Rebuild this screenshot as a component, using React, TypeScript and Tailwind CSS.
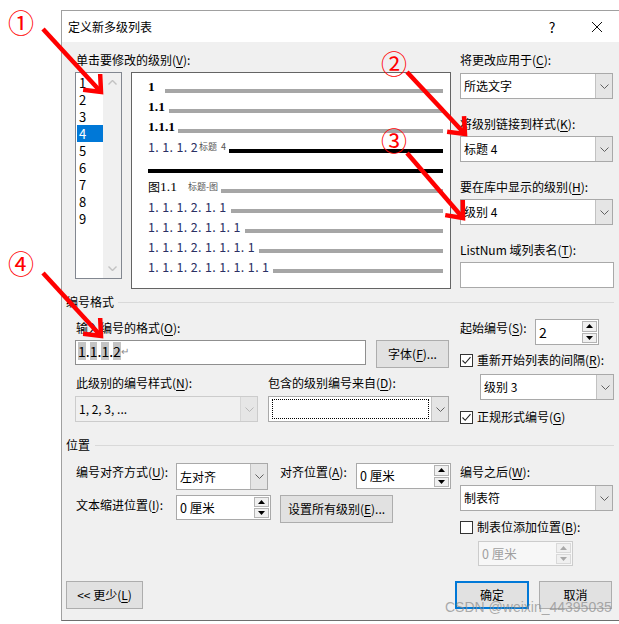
import React from "react";

function U({ children }: { children: React.ReactNode }) {
  return <span className="underline underline-offset-[2px] decoration-[1px]">{children}</span>;
}

function Chev({ color = "#5c5c5c" }: { color?: string }) {
  return (
    <svg width="9" height="5" viewBox="0 0 9 5">
      <polyline points="0.5,0.5 4.5,4.5 8.5,0.5" fill="none" stroke={color} strokeWidth="1" />
    </svg>
  );
}

function Select({
  className = "",
  text,
  disabled = false,
  focus = false,
}: {
  className?: string;
  text?: React.ReactNode;
  disabled?: boolean;
  focus?: boolean;
}) {
  return (
    <div
      className={`flex shrink-0 border ${
        disabled ? "border-[#cccccc] bg-[#f0f0f0]" : "border-[#a9a9a9] bg-white"
      } ${className}`}
    >
      <div className="flex-1 min-w-0 flex items-center pl-[3px]">
        {focus ? (
          <div className="w-full h-[20px] border border-dotted border-black mr-[2px]" />
        ) : (
          <span className="whitespace-nowrap">{text}</span>
        )}
      </div>
      <div
        className={`w-[17px] flex items-center justify-center border-l ${
          disabled ? "border-[#d6d6d6] bg-[#e6e6e6]" : "border-[#c2c2c2] bg-[#e5e5e5]"
        }`}
      >
        <Chev color={disabled ? "#b8b8b8" : "#606060"} />
      </div>
    </div>
  );
}

function Tri({ up, color }: { up: boolean; color: string }) {
  return (
    <svg width="7" height="4" viewBox="0 0 7 4">
      <polygon points={up ? "0,4 3.5,0 7,4" : "0,0 3.5,4 7,0"} fill={color} />
    </svg>
  );
}

function Spin({
  className = "",
  text,
  disabled = false,
  big = false,
}: {
  className?: string;
  text: string;
  disabled?: boolean;
  big?: boolean;
}) {
  return (
    <div
      className={`flex shrink-0 border ${
        disabled ? "border-[#cccccc] bg-[#f7f7f7] text-[#a0a0a0]" : "border-[#a9a9a9] bg-white text-black"
      } ${className}`}
    >
      <div className={`flex-1 flex items-center pl-[3px] whitespace-nowrap ${big ? "text-[14px]" : "text-[12.5px]"}`}>
        {text}
      </div>
      <div className="w-[17px] flex flex-col gap-[1px] p-[1px]">
        <div
          className={`flex-1 flex items-center justify-center border ${
            disabled ? "border-[#d9d9d9] bg-[#f0f0f0]" : "border-[#b4b4b4] bg-[#f0f0f0]"
          }`}
        >
          <Tri up color={disabled ? "#a8a8a8" : "#000"} />
        </div>
        <div
          className={`flex-1 flex items-center justify-center border ${
            disabled ? "border-[#d9d9d9] bg-[#f0f0f0]" : "border-[#b4b4b4] bg-[#f0f0f0]"
          }`}
        >
          <Tri up={false} color={disabled ? "#a8a8a8" : "#000"} />
        </div>
      </div>
    </div>
  );
}

function Check({ checked = false }: { checked?: boolean }) {
  return (
    <div className="w-[13px] h-[13px] shrink-0 border border-[#333333] bg-white flex items-center justify-center">
      {checked && (
        <svg width="11" height="11" viewBox="0 0 11 11">
          <polyline points="1.5,5.5 4.2,8.3 9.5,2.2" fill="none" stroke="#222" strokeWidth="1.1" />
        </svg>
      )}
    </div>
  );
}

function Btn({
  className = "",
  children,
  primary = false,
}: {
  className?: string;
  children: React.ReactNode;
  primary?: boolean;
}) {
  return (
    <div
      className={`h-[28px] shrink-0 flex items-center justify-center bg-[#e1e1e1] whitespace-nowrap ${
        primary ? "border-2 border-[#0078d7]" : "border border-[#adadad]"
      } ${className}`}
    >
      {children}
    </div>
  );
}

function Bar({ className = "" }: { className?: string }) {
  return <div className={`flex-1 h-[4px] mt-[8px] ${className}`} />;
}

function Section({ title, lineMl }: { title: string; lineMl: string }) {
  return (
    <div className="flex items-center h-[16px]">
      <span className="whitespace-nowrap">{title}</span>
      <div className={`flex-1 h-px bg-[#d9d9d9] mr-[7px] ${lineMl}`} />
    </div>
  );
}

const navy = "text-[#2b3064] tracking-[0.35px] text-[12.5px] whitespace-nowrap";

function Arrow({ x1, y1, x2, y2 }: { x1: number; y1: number; x2: number; y2: number }) {
  const dx = x2 - x1;
  const dy = y2 - y1;
  const len = Math.hypot(dx, dy);
  const bx = -dx / len;
  const by = -dy / len;
  const a = (40 * Math.PI) / 180;
  const c = Math.cos(a);
  const s = Math.sin(a);
  const L = 18;
  const w1x = x2 + (bx * c - by * s) * L;
  const w1y = y2 + (bx * s + by * c) * L;
  const w2x = x2 + (bx * c + by * s) * L;
  const w2y = y2 + (-bx * s + by * c) * L;
  return (
    <g stroke="#ff0000" strokeWidth="4.5" fill="none">
      <line x1={x1} y1={y1} x2={x2} y2={y2} />
      <polyline points={`${w1x},${w1y} ${x2},${y2} ${w2x},${w2y}`} strokeLinejoin="miter" />
    </g>
  );
}

export default function App() {
  const levels = ["1", "2", "3", "4", "5", "6", "7", "8", "9"];
  return (
    <div className="relative w-[619px] h-[624px] overflow-hidden bg-white pt-[10px] pl-[61px] font-['Noto_Sans_CJK_SC',sans-serif] text-[12px] leading-[16px] text-black">
      <div className="w-[560px] h-[611px] flex flex-col border-l border-t border-b border-[#a0a0a0] border-b-[#6e6e6e]">
        {/* title bar */}
        <div className="h-[31px] shrink-0 bg-white flex items-center pl-[6px] pr-[19px]">
          <span>定义新多级列表</span>
          <span className="ml-auto w-[12px] text-center text-[14px]">?</span>
          <svg className="ml-[34px]" width="10" height="10" viewBox="0 0 10 10">
            <path d="M0 0L10 10M10 0L0 10" stroke="#111" strokeWidth="1" />
          </svg>
        </div>

        {/* body */}
        <div className="flex-1 bg-[#f0f0f0] pl-[4px] flex flex-col">
          {/* top region */}
          <div className="flex pl-[9px]">
            <div className="w-[376px] flex flex-col pt-[10px]">
              <div className="h-[16px] pl-[1px]">
                单击要修改的级别(<U>V</U>):
              </div>
              <div className="flex mt-[4px]">
                <div className="w-[47px] h-[207px] border border-[#828790] bg-white flex">
                  <div className="w-[27px] flex flex-col pt-[1px] pl-[1px]">
                    {levels.map((l) => (
                      <div
                        key={l}
                        className={`h-[17px] pl-[2px] flex items-center text-[13px] ${
                          l === "4" ? "bg-[#0078d7] text-white" : ""
                        }`}
                      >
                        {l}
                      </div>
                    ))}
                  </div>
                  <div className="flex-1 bg-[#f0f0f0] flex flex-col items-center justify-between py-[7px]">
                    <svg width="9" height="5" viewBox="0 0 9 5">
                      <polyline points="0.5,4.5 4.5,0.5 8.5,4.5" fill="none" stroke="#c2c2c2" strokeWidth="1.4" />
                    </svg>
                    <svg width="9" height="5" viewBox="0 0 9 5">
                      <polyline points="0.5,0.5 4.5,4.5 8.5,0.5" fill="none" stroke="#c2c2c2" strokeWidth="1.4" />
                    </svg>
                  </div>
                </div>
                <div className="w-[320px] h-[217px] ml-[9px] border border-[#646464] bg-white pt-[4px] pl-[16px] pr-[7px] flex flex-col">
                  <div className="h-[20px] flex items-center">
                    <span className="font-['Liberation_Serif',serif] font-bold text-[13.5px]">1</span>
                    <Bar className="ml-[10px] bg-[#a6a6a6]" />
                  </div>
                  <div className="h-[20px] flex items-center">
                    <span className="font-['Liberation_Serif',serif] font-bold text-[13.5px]">1.1</span>
                    <Bar className="ml-[4px] bg-[#a6a6a6]" />
                  </div>
                  <div className="h-[20px] flex items-center">
                    <span className="font-['Liberation_Serif',serif] font-bold text-[13.5px]">1.1.1</span>
                    <Bar className="ml-[3px] bg-[#a6a6a6]" />
                  </div>
                  <div className="h-[20px] flex items-center">
                    <span className={navy}>1. 1. 1. 2</span>
                    <span className="text-[9px] text-[#555] ml-[1px] whitespace-nowrap">标题&nbsp;&nbsp;4</span>
                    <Bar className="ml-[3px] bg-black" />
                  </div>
                  <div className="h-[20px] flex items-center">
                    <Bar className="bg-black" />
                  </div>
                  <div className="h-[20px] flex items-center">
                    <span className="text-[12px]">图</span>
                    <span className="font-['Liberation_Serif',serif] text-[13.5px]">1.1</span>
                    <span className="text-[9px] text-[#555] ml-[11px] whitespace-nowrap">标题-图</span>
                    <Bar className="ml-[3px] bg-[#a6a6a6]" />
                  </div>
                  <div className="h-[20px] flex items-center">
                    <span className={navy}>1. 1. 1. 2. 1. 1</span>
                    <Bar className="ml-[4px] bg-[#a6a6a6]" />
                  </div>
                  <div className="h-[20px] flex items-center">
                    <span className={navy}>1. 1. 1. 2. 1. 1. 1</span>
                    <Bar className="ml-[4px] bg-[#a6a6a6]" />
                  </div>
                  <div className="h-[20px] flex items-center">
                    <span className={navy}>1. 1. 1. 2. 1. 1. 1. 1</span>
                    <Bar className="ml-[4px] bg-[#a6a6a6]" />
                  </div>
                  <div className="h-[20px] flex items-center">
                    <span className={navy}>1. 1. 1. 2. 1. 1. 1. 1. 1</span>
                    <Bar className="ml-[4px] bg-[#a6a6a6]" />
                  </div>
                </div>
              </div>
            </div>

            <div className="w-[154px] ml-[9px] flex flex-col pt-[10px]">
              <div className="h-[16px] whitespace-nowrap">
                将更改应用于(<U>C</U>):
              </div>
              <Select className="mt-[5px] h-[26px] w-[153px]" text="所选文字" />
              <div className="h-[16px] mt-[17px] whitespace-nowrap">
                将级别链接到样式(<U>K</U>):
              </div>
              <Select className="mt-[4px] h-[26px] w-[153px]" text="标题 4" />
              <div className="h-[16px] mt-[17px] whitespace-nowrap">
                要在库中显示的级别(<U>H</U>):
              </div>
              <Select className="mt-[4px] h-[26px] w-[153px]" text="级别 4" />
              <div className="h-[16px] mt-[17px] whitespace-nowrap">
                ListNum 域列表名(<U>T</U>):
              </div>
              <div className="mt-[4px] h-[26px] w-[154px] border border-[#a9a9a9] bg-white" />
            </div>
          </div>

          {/* 编号格式 */}
          <div className="mt-[5px]">
            <Section title="编号格式" lineMl="ml-[4px]" />
          </div>
          <div className="flex pl-[9px]">
            <div className="w-[376px] flex flex-col">
              <div className="h-[16px] mt-[10px] pl-[1px]">
                输入编号的格式(<U>O</U>):
              </div>
              <div className="flex items-start mt-[4px]">
                <div className="w-[291px] h-[25px] border border-[#8f8f8f] bg-white flex items-start pl-[2px] pt-[1px] text-[14px] leading-[18px]">
                  <span className="bg-[#c4c4c4]">1</span>
                  <span>.</span>
                  <span className="bg-[#c4c4c4]">1</span>
                  <span>.</span>
                  <span className="bg-[#c4c4c4]">1</span>
                  <span>.</span>
                  <span className="bg-[#c4c4c4]">2</span>
                  <span className="text-[10px] text-[#8a8a8a] leading-[18px]">↵</span>
                </div>
                <Btn className="ml-[10px] w-[73px]">
                  字体(<U>F</U>)...
                </Btn>
              </div>
              <div className="flex mt-[7px] h-[16px]">
                <div className="w-[193px] pl-[1px] whitespace-nowrap">
                  此级别的编号样式(<U>N</U>):
                </div>
                <div className="whitespace-nowrap">
                  包含的级别编号来自(<U>D</U>):
                </div>
              </div>
              <div className="flex mt-[5px]">
                <Select className="w-[183px] h-[26px]" text="1, 2, 3, ..." disabled />
                <Select className="ml-[10px] w-[181px] h-[26px]" focus />
              </div>
            </div>

            <div className="w-[154px] ml-[9px] flex flex-col">
              <div className="flex items-start mt-[9px]">
                <div className="w-[75px] h-[16px] mt-[1px] whitespace-nowrap">
                  起始编号(<U>S</U>):
                </div>
                <Spin className="w-[64px] h-[26px]" text="2" big />
              </div>
              <div className="flex items-center h-[16px] mt-[7px]">
                <Check checked />
                <span className="ml-[4px] whitespace-nowrap">
                  重新开始列表的间隔(<U>R</U>):
                </span>
              </div>
              <Select className="ml-[20px] mt-[6px] w-[134px] h-[26px]" text="级别 3" />
              <div className="flex items-center h-[16px] mt-[9px]">
                <Check checked />
                <span className="ml-[4px] whitespace-nowrap">
                  正规形式编号(<U>G</U>)
                </span>
              </div>
            </div>
          </div>

          {/* 位置 */}
          <div className="mt-[12px]">
            <Section title="位置" lineMl="ml-[5px]" />
          </div>
          <div className="flex pl-[9px]">
            <div className="w-[376px] flex flex-col">
              <div className="flex items-start mt-[10px]">
                <div className="w-[101px] h-[16px] mt-[1px] pl-[1px] whitespace-nowrap">
                  编号对齐方式(<U>U</U>):
                </div>
                <Select className="w-[92px] h-[27px]" text="左对齐" />
                <div className="ml-[12px] w-[76px] h-[16px] mt-[1px] whitespace-nowrap">
                  对齐位置(<U>A</U>):
                </div>
                <Spin className="w-[95px] h-[26px]" text="0 厘米" />
              </div>
              <div className="flex items-start mt-[5px]">
                <div className="w-[101px] h-[16px] mt-[2px] pl-[1px] whitespace-nowrap">
                  文本缩进位置(<U>I</U>):
                </div>
                <Spin className="w-[95px] h-[25px]" text="0 厘米" />
                <Btn className="ml-[9px] w-[113px]">
                  设置所有级别(<U>E</U>)...
                </Btn>
              </div>
            </div>

            <div className="w-[154px] ml-[9px] flex flex-col">
              <div className="h-[16px] mt-[11px] whitespace-nowrap">
                编号之后(<U>W</U>):
              </div>
              <Select className="mt-[5px] w-[153px] h-[26px]" text="制表符" />
              <div className="flex items-center h-[16px] mt-[8px]">
                <Check />
                <span className="ml-[4px] whitespace-nowrap">
                  制表位添加位置(<U>B</U>):
                </span>
              </div>
              <Spin className="ml-[18px] mt-[6px] w-[95px] h-[25px]" text="0 厘米" disabled />
            </div>
          </div>

          {/* buttons */}
          <div className="flex mt-[15px]">
            <Btn className="w-[77px]">
              {"<< 更少("}
              <U>L</U>)
            </Btn>
            <Btn className="ml-[312px] w-[74px]" primary>
              确定
            </Btn>
            <Btn className="ml-[10px] w-[73px]">取消</Btn>
          </div>
        </div>
      </div>

      {/* watermark */}
      <div className="absolute left-[445px] top-[598px] text-[14px] leading-[18px] font-['Liberation_Sans',sans-serif] text-[#8a8a8a]/70 whitespace-nowrap">
        CSDN @weixin_44395035
      </div>

      {/* red annotations */}
      <div className="absolute left-[8px] top-[6px] text-[26px] leading-[32px] text-[#ff0000]">①</div>
      <div className="absolute left-[381px] top-[47px] text-[26px] leading-[32px] text-[#ff0000]">②</div>
      <div className="absolute left-[381px] top-[124px] text-[26px] leading-[32px] text-[#ff0000]">③</div>
      <div className="absolute left-[8px] top-[247px] text-[26px] leading-[32px] text-[#ff0000]">④</div>
      <svg className="absolute left-0 top-0 pointer-events-none" width="619" height="624" viewBox="0 0 619 624">
        <Arrow x1={43} y1={29} x2={101} y2={92} />
        <Arrow x1={407} y1={72} x2={465} y2={134} />
        <Arrow x1={407} y1={153} x2={463} y2={218} />
        <Arrow x1={43} y1={273} x2={101} y2={336} />
      </svg>
    </div>
  );
}
